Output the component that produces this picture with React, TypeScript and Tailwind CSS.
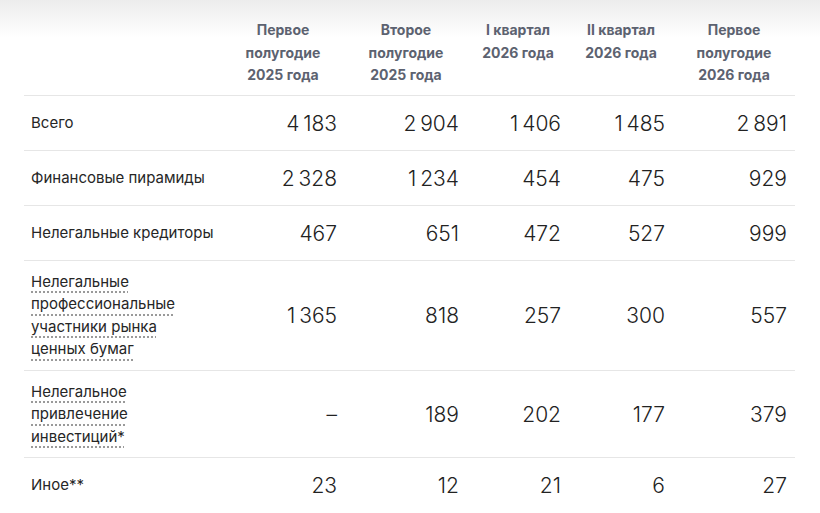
const HEAD = [
  "Первое полугодие 2025 года",
  "Второе полугодие 2025 года",
  "I квартал 2026 года",
  "II квартал 2026 года",
  "Первое полугодие 2026 года",
];

const HEAD_LINES: string[][] = [
  ["Первое", "полугодие", "2025 года"],
  ["Второе", "полугодие", "2025 года"],
  ["I квартал", "2026 года"],
  ["II квартал", "2026 года"],
  ["Первое", "полугодие", "2026 года"],
];

const WIDTHS = ["w-[124px]", "w-[122px]", "w-[102px]", "w-[104px]", "w-[122px]"];

type Row = { label: string[]; dotted?: boolean; values: string[] };

const ROWS: Row[] = [
  { label: ["Всего"], values: ["4 183", "2 904", "1 406", "1 485", "2 891"] },
  { label: ["Финансовые пирамиды"], values: ["2 328", "1 234", "454", "475", "929"] },
  { label: ["Нелегальные кредиторы"], values: ["467", "651", "472", "527", "999"] },
  {
    label: ["Нелегальные", "профессиональные", "участники рынка", "ценных бумаг"],
    dotted: true,
    values: ["1 365", "818", "257", "300", "557"],
  },
  {
    label: ["Нелегальное", "привлечение", "инвестиций*"],
    dotted: true,
    values: ["–", "189", "202", "177", "379"],
  },
  { label: ["Иное**"], values: ["23", "12", "21", "6", "27"] },
];

export default function App() {
  return (
    <div
      className="min-h-[513px] bg-[linear-gradient(to_bottom,#ececec_0px,#ffffff_38px)] pl-6"
      style={{ fontFamily: "Inter, 'Noto Sans', sans-serif" }}
    >
      <table className="w-[771px] border-collapse table-fixed" aria-label={HEAD.join(", ")}>
        <thead>
          <tr className="border-b border-[#e6e6e6]">
            <th className="w-[197px]"></th>
            {HEAD_LINES.map((lines, i) => (
              <th
                key={i}
                className={`${WIDTHS[i]} px-2 pt-[19px] pb-[8px] align-top text-center text-[14px] font-bold leading-[22.5px] text-[#5c6270]`}
              >
                {lines.map((l) => (
                  <div key={l}>{l}</div>
                ))}
              </th>
            ))}
          </tr>
        </thead>
        <tbody>
          {ROWS.map((row, ri) => (
            <tr key={ri} className={ri < ROWS.length - 1 ? "border-b border-[#e6e6e6]" : ""}>
              <td className="px-[7px] pt-[10px] pb-[9px] align-middle text-[15px] leading-[22.5px] text-[#262626]">
                {row.label.map((l) => (
                  <div key={l}>
                    <span
                      className={
                        row.dotted
                          ? "underline decoration-dotted decoration-[#9a9a9a] decoration-2 underline-offset-[5px]"
                          : ""
                      }
                    >
                      {l}
                    </span>
                  </div>
                ))}
              </td>
              {row.values.map((v, vi) => (
                <td
                  key={vi}
                  className="px-2 pt-[10px] pb-[9px] align-middle text-right text-[21px] font-light leading-[35px] text-[#222222]"
                >
                  {v.replace(" ", "\u2009")}
                </td>
              ))}
            </tr>
          ))}
        </tbody>
      </table>
    </div>
  );
}
